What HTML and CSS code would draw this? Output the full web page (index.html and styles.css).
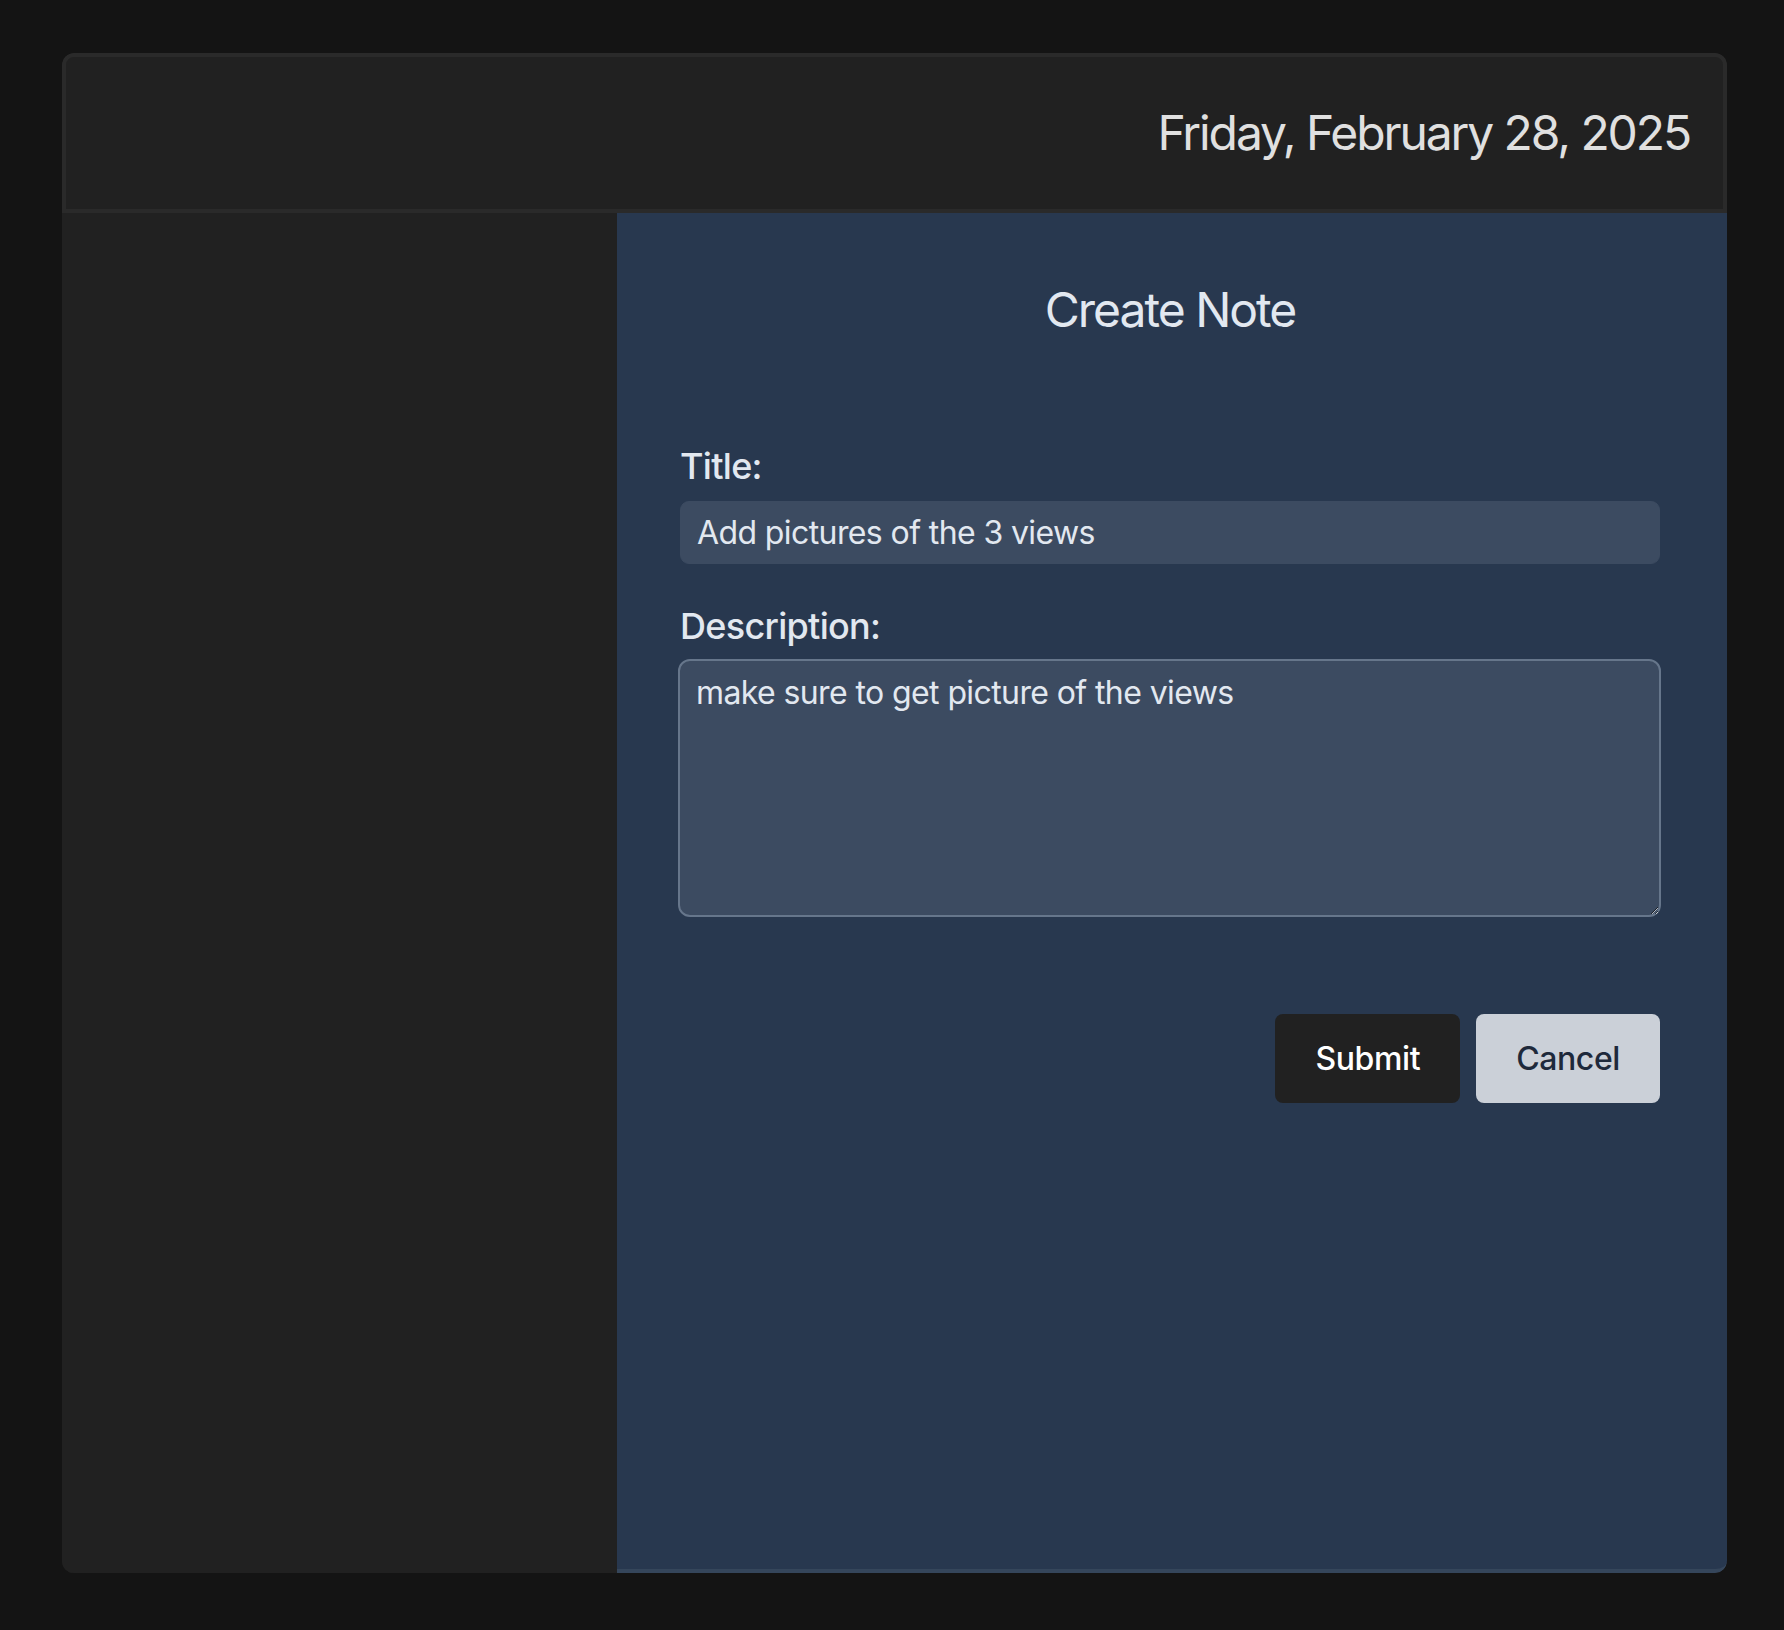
FILE: index.html
```html
<!DOCTYPE html>
<html lang="en">
<head>
<meta charset="utf-8">
<title>Create Note</title>
<link rel="stylesheet" href="styles.css">
</head>
<body>
<div class="app">
  <div class="card">
    <header class="topbar">
      <div class="date">Friday, February 28, 2025</div>
    </header>
    <div class="content">
      <aside class="sidebar"></aside>
      <main class="main">
        <h1 class="heading">Create Note</h1>
        <form class="form">
          <div class="field">
            <label class="label" for="title">Title:</label>
            <input class="input" id="title" type="text" value="Add pictures of the 3 views">
          </div>
          <div class="field">
            <label class="label" for="desc">Description:</label>
            <textarea class="textarea" id="desc">make sure to get picture of the views</textarea>
          </div>
          <div class="actions">
            <button type="button" class="btn btn-submit">Submit</button>
            <button type="button" class="btn btn-cancel">Cancel</button>
          </div>
        </form>
      </main>
    </div>
  </div>
</div>
</body>
</html>
```

FILE: styles.css
```css
* { box-sizing: border-box; }

html, body {
  margin: 0;
  padding: 0;
  background: #141414;
  font-family: Inter, "Noto Sans", "Liberation Sans", sans-serif;
}

.app {
  width: 1784px;
  height: 1630px;
  padding: 53px 57px 57px 62px;
}

.card {
  height: 1520px;
  background: #212121;
  border-radius: 12px;
  display: flex;
  flex-direction: column;
  overflow: hidden;
}

.topbar {
  height: 160px;
  flex: none;
  border: 4px solid #2a2a2a;
  border-radius: 12px 12px 0 0;
  display: flex;
  align-items: center;
  justify-content: flex-end;
  padding-right: 33px;
}

.date {
  font-size: 48px;
  color: #e0e0e0;
  line-height: 58px;
  letter-spacing: -2.1px;
}

.content {
  flex: 1;
  display: grid;
  grid-template-columns: 555px 1fr;
  min-height: 0;
}

.sidebar {
  background: #212121;
}

.main {
  background: #28384f;
  border-bottom: 4px solid #35465b;
  border-bottom-right-radius: 12px;
  padding: 68px 67px 0 63px;
}

.heading {
  margin: 0;
  text-align: center;
  font-size: 48px;
  font-weight: 400;
  line-height: 58px;
  letter-spacing: -2px;
  color: #e2e8f0;
}

.form {
  margin-top: 105px;
}

.field {
  display: flex;
  flex-direction: column;
  margin-bottom: 40px;
}

.label {
  font-size: 36px;
  font-weight: 500;
  line-height: 44px;
  letter-spacing: -0.7px;
  color: #e2e8f0;
  margin-bottom: 13px;
}

.input {
  height: 63px;
  border: 1px solid #3c4b61;
  border-radius: 9px;
  background: #3c4b61;
  color: #e2e8f0;
  font-family: inherit;
  font-size: 32px;
  letter-spacing: -0.6px;
  padding: 0 16px;
  outline: none;
}

.textarea {
  height: 258px;
  margin: -2px -1px 0 -2px;
  border: 2px solid #66768b;
  border-radius: 12px;
  background: #3c4b61;
  color: #e2e8f0;
  font-family: inherit;
  font-size: 32px;
  line-height: 39px;
  letter-spacing: -0.6px;
  padding: 12px 16px;
  outline: none;
  resize: vertical;
}

.actions {
  display: flex;
  justify-content: flex-end;
  gap: 16px;
  margin-top: 97px;
}

.btn {
  height: 89px;
  border: none;
  border-radius: 8px;
  font-family: inherit;
  font-size: 32px;
  font-weight: 500;
  letter-spacing: -0.4px;
  padding: 0 40px;
  cursor: pointer;
}

.btn-submit {
  background: #212121;
  color: #ffffff;
}

.btn-cancel {
  background: #cbd0d8;
  color: #1e293b;
}
```
